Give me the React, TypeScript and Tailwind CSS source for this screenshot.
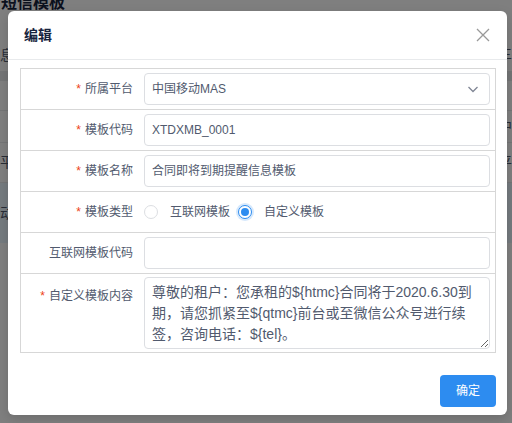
import React from 'react';

const font = { fontFamily: '"Liberation Sans", "Noto Sans CJK SC", sans-serif' };

function Star() {
  return <span className="mr-[4px] text-[#ed4014]">*</span>;
}

function Label({ text, required }: { text: string; required?: boolean }) {
  return (
    <div className="w-[123px] shrink-0 pr-[11px] text-right text-[12px] leading-[32px] text-[#515a6e]">
      {required && <Star />}
      {text}
    </div>
  );
}

function Radio({ checked, label }: { checked?: boolean; label: string }) {
  return (
    <label className="flex items-center">
      <span
        className={
          checked
            ? 'flex h-[14px] w-[14px] items-center justify-center rounded-full border border-[#2d8cf0] bg-white shadow-[0_0_0_2px_rgba(45,140,240,0.2)]'
            : 'h-[14px] w-[14px] rounded-full border border-[#dcdee2] bg-white'
        }
      >
        {checked && <span className="h-[8px] w-[8px] rounded-full bg-[#2d8cf0]" />}
      </span>
      <span className="ml-[12px] text-[12px] text-[#515a6e]">{label}</span>
    </label>
  );
}

export default function App() {
  const content =
    '尊敬的租户：您承租的${htmc}合同将于2020.6.30到期，请您抓紧至${qtmc}前台或至微信公众号进行续签，咨询电话：${tel}。';

  return (
    <div className="relative h-[423px] w-[512px] overflow-hidden bg-white" style={font}>
      {/* page behind the mask */}
      <div className="flex flex-col text-[#515a6e]">
        <div className="-mt-[9px] pl-[1px] text-[16px] font-bold text-[#17233d]">短信模板</div>
        <div className="mt-[30px] flex h-[20px] items-center justify-between text-[14px]">
          <span>息</span>
          <span className="text-[12px]">三</span>
        </div>
        <div className="mt-[6px] h-[10px] bg-[#e8eaec]" />
        <div className="h-[30px] border-b border-[#e8eaec]" />
        <div className="flex h-[32px] items-center justify-end border-b border-[#e8eaec] text-[14px]">
          <span>中</span>
        </div>
        <div className="flex h-[40px] items-center justify-between border-b border-[#e8eaec] text-[14px]">
          <span>平</span>
          <span>平</span>
        </div>
        <div className="flex h-[60px] items-center bg-[#ebf7ff] text-[14px]">
          <span>动</span>
        </div>
      </div>
      <div className="absolute inset-0 bg-black/50" />

      {/* dialog */}
      <div className="absolute left-[8px] top-[11px] flex h-[404px] w-[499px] flex-col rounded-[6px] bg-white shadow-[0_4px_12px_rgba(0,0,0,0.15)]">
        <div className="flex h-[49px] items-center justify-between border-b border-[#e8eaec] pl-[16px] pr-[16px]">
          <span className="text-[14px] font-bold text-[#17233d]">编辑</span>
          <svg width="14" height="14" viewBox="0 0 14 14" className="mr-[1px]">
            <path d="M1 1L13 13M13 1L1 13" stroke="#999" strokeWidth="1.3" fill="none" />
          </svg>
        </div>

        <div className="pl-[12px] pr-[11px] pt-[8px]">
          <div className="border border-[#d7d7d7]">
            <div className="flex items-center py-[4px]">
              <Label text="所属平台" required />
              <div className="mr-[5px] flex h-[32px] flex-1 items-center justify-between rounded-[4px] border border-[#dcdee2] pl-[7px] pr-[10px] text-[12px] text-[#515a6e]">
                <span>中国移动MAS</span>
                <svg width="12" height="12" viewBox="0 0 12 12">
                  <path d="M1.5 4L6 8.5L10.5 4" stroke="#808695" strokeWidth="1.3" fill="none" />
                </svg>
              </div>
            </div>
            <div className="flex items-center border-t border-[#d7d7d7] py-[4px]">
              <Label text="模板代码" required />
              <div className="mr-[5px] flex h-[32px] flex-1 items-center rounded-[4px] border border-[#dcdee2] px-[7px] text-[12px] text-[#515a6e]">
                XTDXMB_0001
              </div>
            </div>
            <div className="flex items-center border-t border-[#d7d7d7] py-[4px]">
              <Label text="模板名称" required />
              <div className="mr-[5px] flex h-[32px] flex-1 items-center rounded-[4px] border border-[#dcdee2] px-[7px] text-[12px] text-[#515a6e]">
                合同即将到期提醒信息模板
              </div>
            </div>
            <div className="flex items-center border-t border-[#d7d7d7] py-[4px]">
              <Label text="模板类型" required />
              <div className="flex h-[32px] flex-1 items-center gap-[8px]">
                <Radio label="互联网模板" />
                <Radio checked label="自定义模板" />
              </div>
            </div>
            <div className="flex items-center border-t border-[#d7d7d7] py-[4px]">
              <Label text="互联网模板代码" />
              <div className="mr-[5px] h-[32px] flex-1 rounded-[4px] border border-[#dcdee2]" />
            </div>
            <div className="flex items-start border-t border-[#d7d7d7] pb-[3px] pt-[3px]">
              <div className="pt-[3px]">
                <Label text="自定义模板内容" required />
              </div>
              <textarea
                className="mr-[5px] h-[72px] flex-1 rounded-[4px] border border-[#dcdee2] px-[7px] py-[4px] text-[14px] leading-[21px] text-[#515a6e] outline-none"
                defaultValue={content}
              />
            </div>
          </div>
        </div>

        <div className="mt-auto flex justify-end pb-[8px] pr-[11px]">
          <button className="h-[32px] w-[56px] rounded-[4px] bg-[#2d8cf0] text-[12px] text-white">确定</button>
        </div>
      </div>
    </div>
  );
}
